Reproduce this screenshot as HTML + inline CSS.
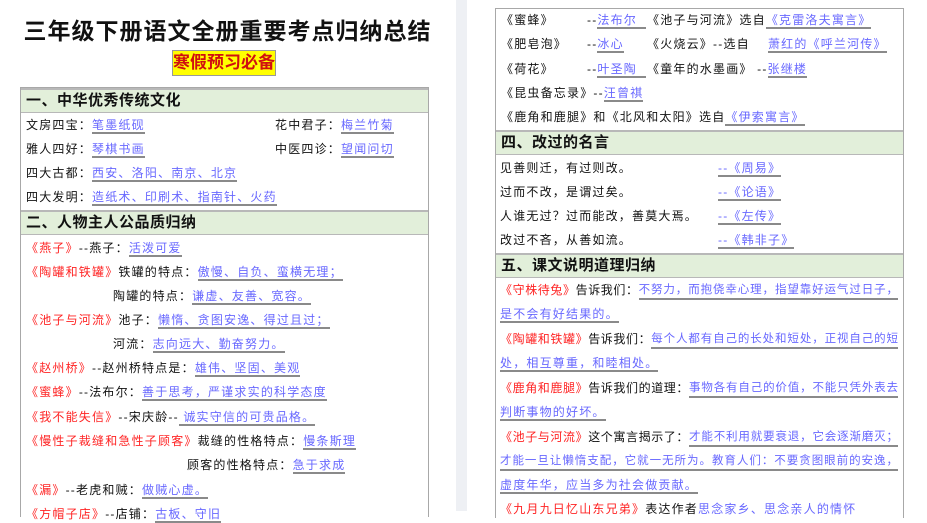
<!DOCTYPE html>
<html><head><meta charset="utf-8"><style>
*{margin:0;padding:0;box-sizing:border-box}
body{width:927px;height:511px;overflow:hidden;background:#fff;position:relative;font-family:"Liberation Sans","Noto Sans CJK SC",sans-serif;font-size:12px;color:#111}
.gap{position:absolute;left:456px;top:0;width:11px;height:511px;background:#eef0f4}
.box{position:absolute;border:1px solid #a8a8a8;border-bottom:none}
.hd{position:absolute;left:0;right:0;height:25px;background:#e2efda;border-top:2px solid #b8b8b8;border-bottom:1px solid #b8b8b8;font-size:15px;font-weight:bold;line-height:22px;padding-left:5px;letter-spacing:0.5px}
.l{position:absolute;white-space:nowrap;line-height:16px;letter-spacing:1.2px}
.r{color:#ff2424}
.u{color:#6868ff;border-bottom:2px solid #8a8a8a}
.t{position:absolute;left:0;width:455px;text-align:center;font-size:23px;font-weight:bold;top:12px;letter-spacing:1px}
.badge{position:absolute;left:172px;top:50px;width:104px;height:26px;background:#ffff00;border:1px solid #999;color:#d01010;font-size:17px;font-weight:bold;text-align:center;line-height:24px}
.f{display:flex;width:398px;letter-spacing:0.6px;overflow:hidden}
.f span{white-space:nowrap;flex:none}
.f .u{flex:1 1 0;min-width:0;font-size:11.5px;letter-spacing:0;text-align-last:justify;text-align:justify;overflow:hidden}
</style></head><body>
<div class="t">三年级下册语文全册重要考点归纳总结</div>
<div class="badge">寒假预习必备</div>
<div class="gap"></div>

<div class="box" style="left:20px;top:87px;width:409px;height:430px">
 <div class="hd" style="top:0">一、中华优秀传统文化</div>
 <div class="hd" style="top:122px">二、人物主人公品质归纳</div>
</div>
<div class="l" style="left:26px;top:117px">文房四宝：<span class="u">笔墨纸砚</span></div>
<div class="l" style="left:275px;top:117px">花中君子：<span class="u">梅兰竹菊</span></div>
<div class="l" style="left:26px;top:141px">雅人四好：<span class="u">琴棋书画</span></div>
<div class="l" style="left:275px;top:141px">中医四诊：<span class="u">望闻问切</span></div>
<div class="l" style="left:26px;top:165px">四大古都：<span class="u">西安、洛阳、南京、北京</span></div>
<div class="l" style="left:26px;top:189px">四大发明：<span class="u">造纸术、印刷术、指南针、火药</span></div>
<div class="l" style="left:26px;top:240px"><span class="r">《燕子》</span>--燕子：<span class="u">活泼可爱</span></div>
<div class="l" style="left:26px;top:264px"><span class="r">《陶罐和铁罐》</span>铁罐的特点：<span class="u">傲慢、自负、蛮横无理；</span></div>
<div class="l" style="left:113px;top:288px">陶罐的特点：<span class="u">谦虚、友善、宽容。</span></div>
<div class="l" style="left:26px;top:312px"><span class="r">《池子与河流》</span>池子：<span class="u">懒惰、贪图安逸、得过且过；</span></div>
<div class="l" style="left:113px;top:336px">河流：<span class="u">志向远大、勤奋努力。</span></div>
<div class="l" style="left:26px;top:360px"><span class="r">《赵州桥》</span>--赵州桥特点是：<span class="u">雄伟、坚固、美观</span></div>
<div class="l" style="left:26px;top:384px"><span class="r">《蜜蜂》</span>--法布尔：<span class="u">善于思考，严谨求实的科学态度</span></div>
<div class="l" style="left:26px;top:409px"><span class="r">《我不能失信》</span>--宋庆龄--<span class="u"> 诚实守信的可贵品格。</span></div>
<div class="l" style="left:26px;top:433px"><span class="r">《慢性子裁缝和急性子顾客》</span>裁缝的性格特点：<span class="u">慢条斯理</span></div>
<div class="l" style="left:187px;top:457px">顾客的性格特点：<span class="u">急于求成</span></div>
<div class="l" style="left:26px;top:482px"><span class="r">《漏》</span>--老虎和贼：<span class="u">做贼心虚。</span></div>
<div class="l" style="left:26px;top:506px"><span class="r">《方帽子店》</span>--店铺：<span class="u">古板、守旧</span></div>

<div class="box" style="left:495px;top:8px;width:409px;height:510px">
 <div class="hd" style="top:121px">四、改过的名言</div>
 <div class="hd" style="top:244px">五、课文说明道理归纳</div>
</div>
<div class="l" style="left:501px;top:12px">《蜜蜂》</div>
<div class="l" style="left:587px;top:12px">--<span class="u">法布尔&nbsp;&nbsp;</span></div>
<div class="l" style="left:647px;top:12px">《池子与河流》选自<span class="u">《克雷洛夫寓言》</span></div>
<div class="l" style="left:501px;top:36px">《肥皂泡》</div>
<div class="l" style="left:587px;top:36px">--<span class="u">冰心</span></div>
<div class="l" style="left:647px;top:36px">《火烧云》--选自&nbsp;&nbsp;&nbsp;&nbsp;<span class="u">萧红的《呼兰河传》</span></div>
<div class="l" style="left:501px;top:61px">《荷花》</div>
<div class="l" style="left:587px;top:61px">--<span class="u">叶圣陶&nbsp;&nbsp;</span></div>
<div class="l" style="left:647px;top:61px">《童年的水墨画》 --<span class="u">张继楼</span></div>
<div class="l" style="left:501px;top:85px">《昆虫备忘录》--<span class="u">汪曾祺</span></div>
<div class="l" style="left:501px;top:109px">《鹿角和鹿腿》和《北风和太阳》选自<span class="u">《伊索寓言》</span></div>
<div class="l" style="left:500px;top:160px">见善则迁，有过则改。</div><div class="l" style="left:718px;top:160px"><span class="u">--《周易》</span></div>
<div class="l" style="left:500px;top:184px">过而不改，是谓过矣。</div><div class="l" style="left:718px;top:184px"><span class="u">--《论语》</span></div>
<div class="l" style="left:500px;top:208px">人谁无过？过而能改，善莫大焉。</div><div class="l" style="left:718px;top:208px"><span class="u">--《左传》</span></div>
<div class="l" style="left:500px;top:232px">改过不吝，从善如流。</div><div class="l" style="left:718px;top:232px"><span class="u">--《韩非子》</span></div>

<div class="l f" style="left:500px;top:282px"><span class="r">《守株待兔》</span><span>告诉我们：</span><span class="u">不努力，而抱侥幸心理，指望靠好运气过日子，</span></div>
<div class="l" style="left:500px;top:306px"><span class="u">是不会有好结果的。</span></div>
<div class="l f" style="left:500px;top:331px"><span class="r">《陶罐和铁罐》</span><span>告诉我们：</span><span class="u">每个人都有自己的长处和短处，正视自己的短</span></div>
<div class="l" style="left:500px;top:355px"><span class="u">处，相互尊重，和睦相处。</span></div>
<div class="l f" style="left:500px;top:380px"><span class="r">《鹿角和鹿腿》</span><span>告诉我们的道理：</span><span class="u">事物各有自己的价值，不能只凭外表去</span></div>
<div class="l" style="left:500px;top:404px"><span class="u">判断事物的好坏。</span></div>
<div class="l f" style="left:500px;top:429px"><span class="r">《池子与河流》</span><span>这个寓言揭示了：</span><span class="u">才能不利用就要衰退，它会逐渐磨灭；</span></div>
<div class="l f" style="left:500px;top:453px"><span class="u">才能一旦让懒惰支配，它就一无所为。教育人们：不要贪图眼前的安逸，</span></div>
<div class="l" style="left:500px;top:477px"><span class="u">虚度年华，应当多为社会做贡献。</span></div>
<div class="l" style="left:500px;top:501px"><span class="r">《九月九日忆山东兄弟》</span>表达作者<span style="color:#6868ff">思念家乡、思念亲人的情怀</span></div>
</body></html>
